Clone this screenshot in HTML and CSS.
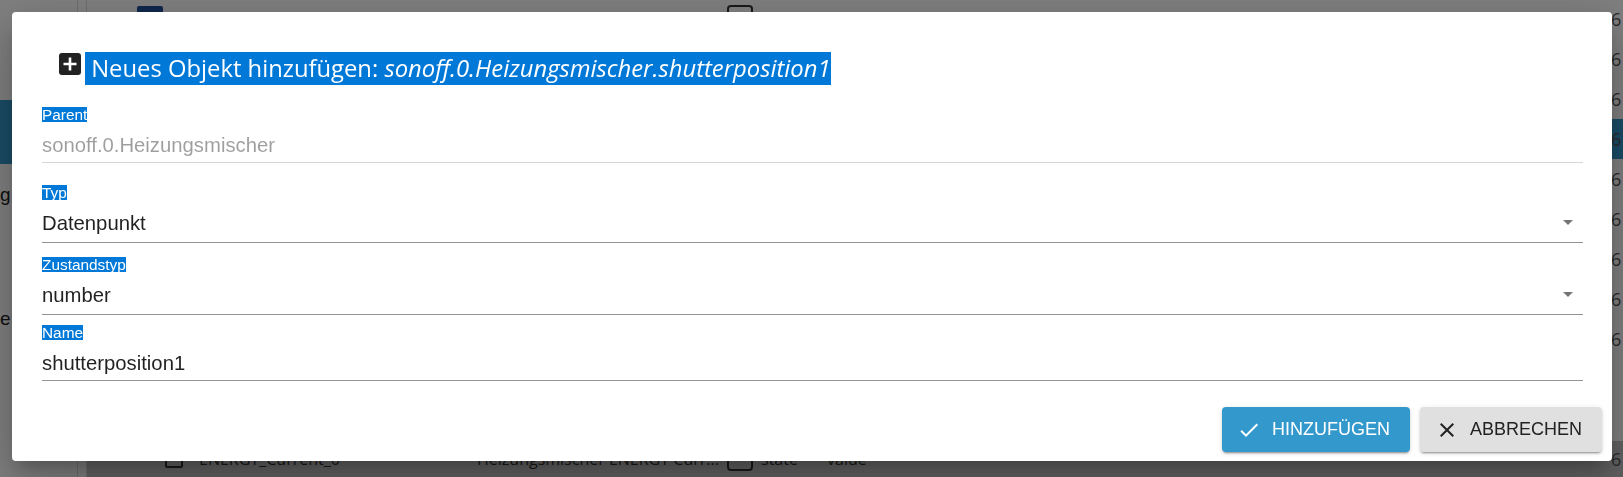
FILE: index.html
```html
<!DOCTYPE html>
<html lang="de">
<head>
    <meta charset="UTF-8">
    <meta name="viewport" content="width=device-width, initial-scale=1.0">
    <title>Objekte</title>
    <link rel="stylesheet" href="styles.css">
</head>
<body>
    <div class="page">
        <div class="sidebar">
            <div class="nav-item active"></div>
            <div class="nav-item nav-g">g</div>
            <div class="nav-item nav-e">e</div>
        </div>
        <div class="tree">
            <div class="row row-top">
                <span class="row-name"><span class="folder"></span></span>
                <span class="row-desc"></span>
                <span class="row-icon"></span>
                <span class="row-value">6</span>
            </div>
            <div class="row"><span class="row-name"></span><span class="row-desc"></span><span class="row-value">6</span></div>
            <div class="row"><span class="row-name"></span><span class="row-desc"></span><span class="row-value">6</span></div>
            <div class="row row-active"><span class="row-name"></span><span class="row-desc"></span><span class="row-value">6</span></div>
            <div class="row"><span class="row-name"></span><span class="row-desc"></span><span class="row-value">6</span></div>
            <div class="row"><span class="row-name"></span><span class="row-desc"></span><span class="row-value">6</span></div>
            <div class="row"><span class="row-name"></span><span class="row-desc"></span><span class="row-value">6</span></div>
            <div class="row"><span class="row-name"></span><span class="row-desc"></span><span class="row-value">6</span></div>
            <div class="row"><span class="row-name"></span><span class="row-desc"></span><span class="row-value">6</span></div>
            <div class="row row-last">
                <span class="row-name"><span class="checkbox"></span>ENERGY_Current_0</span>
                <span class="row-desc">Heizungsmischer ENERGY Curr...</span>
                <span class="row-icon"></span>
                <span class="row-type">state</span>
                <span class="row-role">value</span>
                <span class="row-value">6</span>
            </div>
        </div>
    </div>

    <div class="backdrop"></div>

    <div class="dialog">
        <div class="dialog-title">
            <svg class="title-icon" viewBox="0 0 22 22" width="22" height="22">
                <rect x="0" y="0" width="22" height="22" rx="3" fill="#222"/>
                <path d="M11 4.5v13M4.5 11h13" stroke="#fff" stroke-width="2.6"/>
            </svg>
            <span class="selected title-text">&nbsp;Neues Objekt hinzufügen: <i>sonoff.0.Heizungsmischer.shutterposition1</i></span>
        </div>

        <div class="dialog-content">
            <div class="field field-parent">
                <div class="field-label"><span class="selected">Parent</span></div>
                <div class="field-input disabled">sonoff.0.Heizungsmischer</div>
            </div>

            <div class="field field-typ">
                <div class="field-label"><span class="selected">Typ</span></div>
                <div class="field-input select">
                    Datenpunkt
                    <svg class="arrow" viewBox="0 0 24 24" width="24" height="24"><path d="M7 10l5 5 5-5z"/></svg>
                </div>
            </div>

            <div class="field field-state">
                <div class="field-label"><span class="selected">Zustandstyp</span></div>
                <div class="field-input select">
                    number
                    <svg class="arrow" viewBox="0 0 24 24" width="24" height="24"><path d="M7 10l5 5 5-5z"/></svg>
                </div>
            </div>

            <div class="field">
                <div class="field-label"><span class="selected">Name</span></div>
                <div class="field-input">shutterposition1</div>
            </div>
        </div>

        <div class="dialog-actions">
            <button class="btn btn-primary">
                <svg viewBox="0 0 24 24" width="24" height="24"><path d="M9 16.17 4.83 12l-1.42 1.41L9 19 21 7l-1.41-1.41z"/></svg>
                Hinzufügen
            </button>
            <button class="btn btn-default">
                <svg viewBox="0 0 24 24" width="24" height="24"><path d="M19 6.41 17.59 5 12 10.59 6.41 5 5 6.41 10.59 12 5 17.59 6.41 19 12 13.41 17.59 19 19 17.59 13.41 12z"/></svg>
                Abbrechen
            </button>
        </div>
    </div>
</body>
</html>
```

FILE: styles.css
```css
* {
    margin: 0;
    padding: 0;
    box-sizing: border-box;
}

body {
    font-family: 'Liberation Sans', Arial, sans-serif;
    background: #fff;
    height: 100vh;
    overflow: hidden;
}

/* page behind the dialog */

.page {
    display: flex;
    height: 100%;
}

.sidebar {
    width: 78px;
    border-right: 1px solid #ddd;
    display: flex;
    flex-direction: column;
    padding-top: 100px;
    font-size: 19px;
    color: #222;
}

.nav-item.active {
    height: 64px;
    background: #3399cc;
}

.nav-g {
    margin-top: 18px;
    line-height: 26px;
}

.nav-e {
    margin-top: 98px;
    line-height: 26px;
}

.tree {
    flex: 1;
    border-left: 1px solid #ddd;
    margin-left: 8px;
    display: flex;
    flex-direction: column;
    font-family: 'Open Sans', sans-serif;
}

.row {
    display: flex;
    align-items: center;
    height: 40px;
    flex-shrink: 0;
    font-size: 16px;
    color: #333;
    white-space: nowrap;
}

.row-top {
    margin-top: -1px;
}

.row-top .row-name {
    padding-left: 50px;
    align-self: flex-start;
}

.row-top .row-icon {
    align-self: flex-start;
    margin-top: 6px;
}

.row-active {
    background: #3399cc;
}

.row-last {
    margin-top: auto;
    height: 36px;
    background: #c4c4c4;
}

.row-last .row-name {
    padding-left: 78px;
}

.row-name {
    width: 390px;
    padding-left: 70px;
    display: flex;
    align-items: center;
    gap: 16px;
}

.folder {
    width: 26px;
    height: 18px;
    margin-top: 7px;
    background: #1e4f9a;
    border-radius: 2px;
}

.checkbox {
    width: 18px;
    height: 18px;
    border: 2px solid #333;
    border-radius: 2px;
}

.row-desc {
    width: 250px;
}

.row-icon {
    width: 26px;
    height: 24px;
    border: 2px solid #333;
    border-radius: 4px;
    margin-right: 8px;
}

.row-type {
    width: 66px;
}

.row-role {
    width: 60px;
}

.row-value {
    margin-left: auto;
    width: 12px;
    font-size: 18px;
    color: #555;
}

.backdrop {
    position: fixed;
    inset: 0;
    background: rgba(0, 0, 0, 0.5);
}

/* dialog */

.dialog {
    position: fixed;
    left: 12px;
    top: 12px;
    width: 1600px;
    background: #fff;
    border-radius: 4px;
    box-shadow: 0 11px 15px -7px rgba(0, 0, 0, 0.2), 0 24px 38px 3px rgba(0, 0, 0, 0.14), 0 9px 46px 8px rgba(0, 0, 0, 0.12);
}

.selected {
    background: #0078d7;
    color: #fff;
}

.dialog-title {
    display: flex;
    align-items: flex-start;
    gap: 4px;
    padding: 40px 0 0 47px;
    font-family: 'Open Sans', 'Noto Sans', sans-serif;
    font-size: 23.8px;
    line-height: 33px;
}

.title-icon {
    margin-top: 1px;
    flex-shrink: 0;
}

.dialog-content {
    padding: 22px 29px 0 30px;
}

.field-label {
    font-size: 15.4px;
    line-height: 15px;
    height: 15px;
}

.field-label .selected {
    display: inline-block;
    line-height: 15px;
    height: 15px;
}

.field-input {
    position: relative;
    margin-top: 10px;
    font-size: 20.3px;
    line-height: 26px;
    padding-bottom: 4px;
    color: rgba(0, 0, 0, 0.87);
    border-bottom: 1px solid #949494;
}

.field-input.disabled {
    color: rgba(0, 0, 0, 0.38);
    border-bottom-color: #d6d6d6;
}

.field-input.select {
    padding-bottom: 6px;
}

.arrow {
    position: absolute;
    right: 3px;
    top: 0;
    fill: #757575;
}

.field-parent {
    margin-bottom: 22px;
}

.field-typ {
    margin-bottom: 14px;
}

.field-state {
    margin-bottom: 10px;
}

.dialog-actions {
    display: flex;
    justify-content: flex-end;
    gap: 10px;
    padding: 26px 10px 9px 0;
}

.btn {
    display: flex;
    align-items: center;
    gap: 11px;
    height: 45px;
    padding: 0 20px 0 15px;
    border: none;
    border-radius: 4px;
    font-family: 'Liberation Sans', Arial, sans-serif;
    font-size: 18px;
    text-transform: uppercase;
    cursor: pointer;
    box-shadow: 0 3px 1px -2px rgba(0, 0, 0, 0.2), 0 2px 2px 0 rgba(0, 0, 0, 0.14), 0 1px 5px 0 rgba(0, 0, 0, 0.12);
}

.btn-primary {
    background: #3399cc;
    color: #fff;
    fill: #fff;
}

.btn-default {
    background: #e0e0e0;
    color: #222;
    fill: #222;
}
```
